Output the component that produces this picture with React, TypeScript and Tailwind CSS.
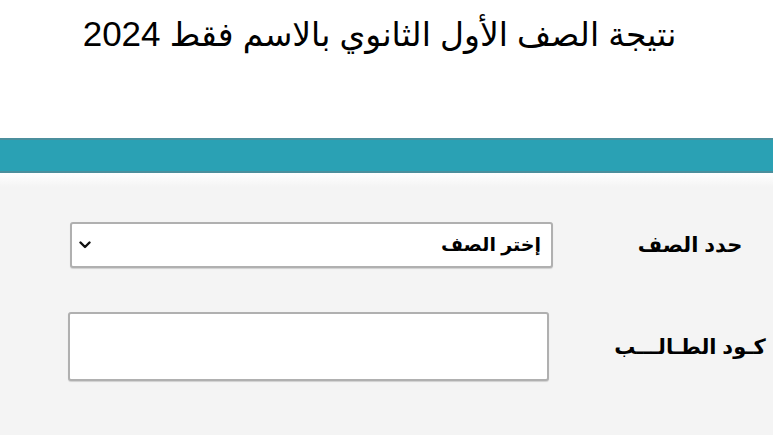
import React from 'react';

const ChevronDown: React.FC = () => (
  <svg width="12" height="8" viewBox="0 0 12 8" fill="none">
    <path d="M1.5 1.5 6 6l4.5-4.5" stroke="#111" strokeWidth="2.4" strokeLinecap="round" strokeLinejoin="round" />
  </svg>
);

export default function App() {
  return (
    <div className="w-[773px] h-[435px] overflow-hidden bg-[#f4f4f4] font-['Liberation_Sans','DejaVu_Sans',sans-serif] text-black">
      {/* title */}
      <div className="bg-white h-[138px] pt-[12px] flex justify-center">
        <h1 dir="rtl" className="text-[33px] leading-[44px] font-normal pr-[14px]">
          نتيجة الصف الأول الثانوي بالاسم فقط <span className="text-[35px]">2024</span>
        </h1>
      </div>

      {/* teal bar */}
      <div className="h-[35px] bg-[#2aa1b4] border-y-2 border-[#4b8f9d]" />
      <div className="h-[14px] bg-gradient-to-b from-white to-[#f4f4f4]" />

      {/* form */}
      <div className="flex flex-col pt-[35px]">
        <div className="flex items-center">
          <div className="ml-[70px] w-[483px] h-[46px] bg-white border-2 border-[#b0b0b0] rounded-[3px] shadow-[0_1px_1px_rgba(0,0,0,0.15)] flex items-center justify-between px-[7px]">
            <ChevronDown />
            <span dir="rtl" className="text-[19px] font-bold pr-[3px]">إختر الصف</span>
          </div>
          <div dir="rtl" className="ml-[57px] w-[160px] text-center text-[21px] font-bold">
            حدد الصف
          </div>
        </div>

        <div className="flex items-center mt-[44px]">
          <div className="ml-[68px] w-[481px] h-[69px] bg-white border-2 border-[#b0b0b0] rounded-[3px] shadow-[0_1px_1px_rgba(0,0,0,0.15)]" />
          <div dir="rtl" className="ml-[61px] w-[160px] text-center text-[21px] font-bold">
            كـود الطـالـــب
          </div>
        </div>
      </div>
    </div>
  );
}
